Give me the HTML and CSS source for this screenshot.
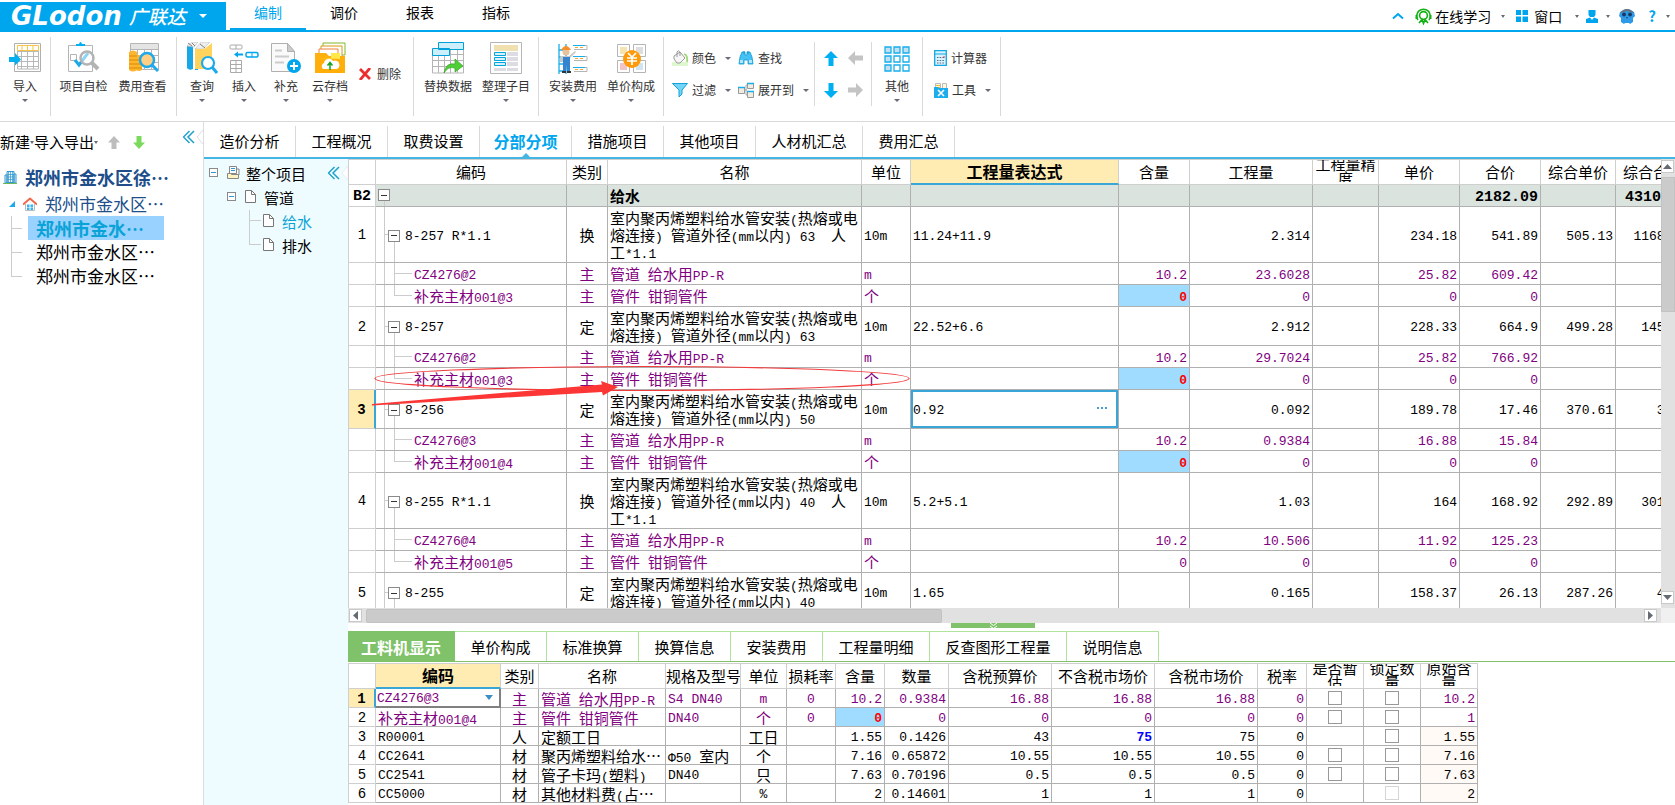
FILE: index.html
```html
<!DOCTYPE html>
<html lang="zh-CN">
<head>
<meta charset="utf-8">
<title>广联达计价</title>
<link rel="stylesheet" href="styles.css">
</head>
<body>
<header class="top">
  <button class="logo"><span class="logo-en">GLodon</span><span class="logo-cn">广联达</span><span class="caret caret-white"></span></button>
  <nav class="menu">
    <a href="#" class="on">编制</a><a href="#">调价</a><a href="#">报表</a><a href="#">指标</a>
  </nav>
  <div class="util">
    <button aria-label="收起"><svg width="12" height="8" viewBox="0 0 12 8"><path d="M1 6.500L6 2l5 4.500" fill="none" stroke="#00a6ed" stroke-width="2"/></svg></button>
    <button class="u-learn"><svg width="17" height="17" viewBox="0 0 17 17"><path d="M3 12A6.800 6.800 0 1 1 14 12" fill="none" stroke="#12b012" stroke-width="1.600"/><circle cx="8.500" cy="7.500" r="3.900" fill="none" stroke="#12b012" stroke-width="1.600"/><path d="M1.500 7v4M15.500 7v4" stroke="#12b012" stroke-width="2"/><path d="M4 15l3-3.500 1.500 4 1.500-4L13 15" fill="none" stroke="#12b012" stroke-width="1.600"/></svg>在线学习<span class="caret"></span></button>
    <button class="u-win"><svg width="12" height="12" viewBox="0 0 12 12"><path d="M0 0h5v5H0zM6.500 0H12v5H6.500zM0 6.500h5V12H0zM6.500 6.500H12V12H6.500z" fill="#00a6ed"/></svg>窗口<span class="caret"></span></button>
    <button class="u-user" aria-label="用户"><svg width="14" height="13" viewBox="0 0 14 13"><path d="M3.500 0h7v5L9 7H5L3.500 5zM1 9l4-1.500 2 2.500 2-2.500L13 9v4H1z" fill="#00a6ed"/></svg><span class="caret"></span></button>
    <button class="u-owl" aria-label="助手"><svg width="16" height="16" viewBox="0 0 16 16"><path d="M1 4Q8-2 15 4l1 4-2 2v4l-3 2-1-1H6l-1 1-3-2v-4L0 8z" fill="#2f9ae8"/><path d="M1 5Q8-3 15 5L8 3z" fill="#6b7078"/><circle cx="5" cy="6.500" r="2" fill="#173a63"/><circle cx="11" cy="6.500" r="2" fill="#173a63"/><path d="M7 9h2l-1 2z" fill="#174f80"/></svg></button>
    <button class="u-help" aria-label="帮助"><b>?</b><span class="caret"></span></button>
  </div>
</header>

<section class="ribbon">
  <div class="group">
    <button class="big w50"><svg viewBox="0 0 32 32"><path d="M5.500 1.500h26v28h-26z" fill="#fff" stroke="#b0b0b0"/><path d="M8 9.500h22M8 14.500h22M8 19.500h22M8 24.500h22M12.500 9v18M18.500 9v18M24.500 9v18M8.500 9v18h21V9" fill="none" stroke="#b8b8b8"/><path d="M8.500 3.500h21v5h-21zM13 3.500v5M18.500 3.500v5M24 3.500v5" fill="none" stroke="#f8c544"/><path d="M0 15h6v-4l6 6.500-6 6V20H0z" fill="#00b0f0"/></svg>导入<span class="caret"></span></button>
  </div>
  <div class="group g2">
    <button class="big w59"><svg viewBox="0 0 32 32"><path d="M.500 3.500h24v26H.500z" fill="#fff" stroke="#b5b5b5"/><path d="M8 4V2h3q1.500-4 3 0h3v2z" fill="#00b0f0"/><path d="M2.500 12.500h6v6h-6z" fill="none" stroke="#b5b5b5"/><path d="M7 18l4 5 9-12" fill="none" stroke="#1fa8e8" stroke-width="3"/><circle cx="19" cy="16" r="6.500" fill="#fff" fill-opacity=".5" stroke="#b3b3b3" stroke-width="2.500"/><path d="M24 21l6 6" stroke="#b3b3b3" stroke-width="4"/></svg>项目自检</button>
    <button class="big w59"><svg viewBox="0 0 32 32"><path d="M3.500 1.500h28v26h-28z" fill="#fff" stroke="#b5b5b5"/><path d="M4 2h27v5H4z" fill="#e4e4e4"/><path d="M4 7.500h27M4 13.500h27M4 20.500h27M10.500 8v19M17.500 8v19M24.500 8v19" stroke="#b5b5b5"/><path d="M2 10q4-3 8 0v18q-4 3-8 0zM9 14q3-2 6 0v14q-3 2-6 0z" fill="#ffb62e"/><path d="M2 14h8M2 18h12M2 22h13M2 26h13" stroke="#d98a00"/><circle cx="20" cy="18" r="7" fill="#ffcf85" stroke="#1da9ec" stroke-width="2.500"/><path d="M25 23l6 6" stroke="#1da9ec" stroke-width="3"/></svg>费用查看</button>
  </div>
  <div class="group g3">
    <button class="big w42"><svg viewBox="0 0 32 32"><path d="M1 4h6v23q-4 2-6-1zM9 6l3 2v20H9z" fill="#18a8e8"/><path d="M1 4l5-4h6l-4 5zM9 7l6-7h9l-7 7z" fill="#eee" stroke="#bbb" stroke-width=".600"/><path d="M9 7h9v20H9zM18 7l8-6v20l-8 6z" fill="#ffd35c"/><path d="M2 1l4 3M6 1l3 3M14 2l5 4" stroke="#555" stroke-width=".700"/><circle cx="22" cy="21" r="6" fill="#fff" stroke="#1da9ec" stroke-width="2.200"/><path d="M26 25l5 6" stroke="#1da9ec" stroke-width="3"/></svg>查询<span class="caret"></span></button>
    <button class="big w42"><svg viewBox="0 0 32 32"><rect x="2" y="3" width="12" height="4" rx="1" fill="none" stroke="#aaa"/><path d="M8 3v4M2.500 18.500h11v12h-11zM2.500 22.500h11M2.500 26.500h11M8 18.500v12" fill="none" stroke="#aaa"/><path d="M6 12.500l4-3v2h5v2h-5v2z" fill="#00a6ed"/><rect x="18" y="10.500" width="12" height="4.500" rx="1.500" fill="none" stroke="#00a6ed" stroke-width="1.500"/><path d="M24 10v5" stroke="#00a6ed"/></svg>插入<span class="caret"></span></button>
    <button class="big w42"><svg viewBox="0 0 32 32"><path d="M1.500 1.500h16l7 8v20h-23z" fill="#fafafa" stroke="#b0b0b0"/><path d="M17.500 1.500v8h7z" fill="#ccc" stroke="#b0b0b0"/><path d="M5 8.500h7M5 14.500h14M5 20.500h9" stroke="#ccc" stroke-width="2"/><circle cx="24" cy="24" r="7" fill="#00a6ed"/><path d="M20 24h8M24 20v8" stroke="#fff" stroke-width="2"/></svg>补充<span class="caret"></span></button>
    <button class="big w46"><svg viewBox="0 0 32 32"><path d="M9 1h22v12H9z" fill="#fff" stroke="#82b82b"/><path d="M7 4h21v12H7z" fill="#fff" stroke="#d69a16"/><path d="M5 7h19v10H5z" fill="#fff" stroke="#f0803c"/><path d="M1 11h11l3 3h16v17H1z" fill="#ffb00d"/><path d="M6 16h11v-5h9v6" fill="#ffe94a"/><path d="M1 18h30v13H1z" fill="#ffae0a"/><path d="M9 27a3.500 3.500 0 0 1 1-6 5 5 0 0 1 9-2 4 4 0 0 1 4 8z" fill="#fff"/><path d="M16 28v-7M13.500 23.500l2.500-3 2.500 3" fill="none" stroke="#1aa321" stroke-width="1.500"/></svg>云存档<span class="caret"></span></button>
    <button class="small del"><svg width="12" height="12" viewBox="0 0 12 12"><path d="M1 1l10 10M11 0L1 12" stroke="#ec2d2d" stroke-width="2.800"/></svg>删除</button>
  </div>
  <div class="group g4">
    <button class="big w58"><svg viewBox="0 0 32 32"><path d="M.500 7v24h31V7zM.500 18.500h31M.500 24.500h31M6.500 13v18M12.500 10v21M18.500 8v23M25.500 7v24M12 12.500h19" fill="#fff" stroke="#b5b5b5"/><path d="M6.500.500h25v7h-25zM.500 6.500h17v7H.500z" fill="#cdeffc" stroke="#00a0d8"/><path d="M12 31q2-11 11-9v-5l8 7-8 6v-4q-7-2-11 5z" fill="#4fce38" stroke="#31a51c" stroke-width=".700"/></svg>替换数据</button>
    <button class="big w58"><svg viewBox="0 0 32 32"><path d="M.500.500h31v31H.500z" fill="#fff" stroke="#b5b5b5"/><path d="M4 3h24v6H4z" fill="#f0dfaf"/><path d="M4.500 10.500h11v3h-11zM4.500 15.500h11v3h-11zM4.500 20.500h11v3h-11z" fill="#d8f1fc" stroke="#00a6dc"/><path d="M17 10h11v4H17zM17 15h11v4H17zM17 20h11v4H17zM17 26h11v3H17zM4 26h12v3H4z" fill="#dcdce2"/></svg>整理子目<span class="caret"></span></button>
  </div>
  <div class="group g4">
    <button class="big w58"><svg viewBox="0 0 32 32"><path d="M2 2v30M9 2v30M2 8h7M2 15h7M2 22h7M2 29h7" stroke="#18aeea" stroke-width="1.300"/><path d="M17 3.500h13v4H17M17 14.500h13v4H17M17 25.500h13v4H17" fill="none" stroke="#b5b5b5"/><path d="M16 3.500h12M16 14.500h12M16 25.500h12" stroke="#18aeea"/><path d="M18 5.500h8M18 16.500h8M18 27.500h8" stroke="#f6a634" stroke-dasharray="3 2"/><circle cx="9" cy="10" r="3.500" fill="#e8c29a"/><path d="M4 8q5-8 10 0z" fill="#f4912c"/><path d="M4 14l8 0 6-5 1 1-6 6v4H3v-5z" fill="#c7c7c7"/><path d="M6 15h7v14h-3v-6l-1 6H6z" fill="#3384ce"/><path d="M5 29h4v2H5zM10 29h4v2h-4z" fill="#333"/></svg>安装费用<span class="caret"></span></button>
    <button class="big w58"><svg viewBox="0 0 32 32"><path d="M2.500 2.500h12v12h-12zM18.500 2.500h12v12h-12zM2.500 18.500h12v12h-12zM18.500 18.500h12v12h-12z" fill="#fff" stroke="#b5b5b5"/><path d="M5 5h7v7H5z" fill="#f5e3b0"/><path d="M21 5h7v7h-7z" fill="#ddd"/><path d="M5 21h7v7H5z" fill="#f1c5c5"/><path d="M21 21h7v7h-7z" fill="#cfe5f1"/><circle cx="17" cy="17" r="9" fill="#ff9b0a"/><path d="M13 11l4 4 4-4M12 16h10M12 19h10M17 15v8" fill="none" stroke="#fff" stroke-width="1.700"/></svg>单价构成<span class="caret"></span></button>
  </div>
  <div class="group tools">
    <div class="pairs">
      <button class="small"><svg width="16" height="16" viewBox="0 0 16 16"><path d="M0 12h16v4H0z" fill="#dff7cf"/><path d="M2 6l6-4 5 6-5 5H5L2 9z" fill="#f6f6f6" stroke="#999"/><path d="M5 7V2q2-3 3 1v3" fill="none" stroke="#999"/><path d="M12 4q4 1 3 8" fill="none" stroke="#9fd977" stroke-width="1.800"/></svg>颜色<span class="caret"></span></button>
      <button class="small"><svg width="16" height="16" viewBox="0 0 16 16"><path d="M4 2h3v3h2V2h3l2 5 1 7h-5v-4H6v4H1l1-7z" fill="#45c1f3" stroke="#0f9bd6" stroke-width=".800"/><path d="M6 1v3M10 1v3" stroke="#0f9bd6"/><path d="M2 10h3v3H2zM11 10h3v3h-3z" fill="#b4e5fa"/></svg>查找</button>
      <button class="small"><svg width="16" height="16" viewBox="0 0 16 16"><path d="M.500 1.500h15L10 8v4l-3 3V8z" fill="#72d4f6" stroke="#12a2d8"/></svg>过滤<span class="caret"></span></button>
      <button class="small"><svg width="16" height="16" viewBox="0 0 16 16"><path d="M7 8h2M8 3v10M8 3h2M8 13h2" stroke="#aaa"/><path d="M.500 5.500h6v6h-6zM9.500 1.500h6v5h-6zM9.500 9.500h6v6h-6z" fill="#f1ece0" stroke="#9a9a9a"/><path d="M0 5.500h7M9 1.500h7M9 9.500h7" stroke="#18aeea" stroke-width="1.500"/></svg>展开到<span class="caret"></span></button>
    </div>
    <div class="moves">
      <button aria-label="上移"><svg width="14" height="15" viewBox="0 0 14 15"><path d="M7 0l7 7H9.500v8h-5V7H0z" fill="#00aef2"/></svg></button>
      <button aria-label="左移"><svg width="15" height="14" viewBox="0 0 15 14"><path d="M0 7l7-7v4.500h8v5H7V14z" fill="#c4c4c4"/></svg></button>
      <button aria-label="下移"><svg width="14" height="15" viewBox="0 0 14 15"><path d="M7 15l7-7H9.500V0h-5v8H0z" fill="#00aef2"/></svg></button>
      <button aria-label="右移"><svg width="15" height="14" viewBox="0 0 15 14"><path d="M15 7L8 0v4.500H0v5h8V14z" fill="#c4c4c4"/></svg></button>
    </div>
    <button class="big w50"><svg viewBox="0 0 32 32"><g fill="#c3dff2" stroke="#16aeea" stroke-width="1.300"><path d="M4 5h6v6H4zM13 5h6v6h-6zM22 5h6v6h-6zM4 14h6v6H4zM4 23h6v6H4z"/><path d="M13 14h6v6h-6zM22 14h6v6h-6zM13 23h6v6h-6zM22 23h6v6h-6z" fill="#fff"/></g></svg>其他<span class="caret"></span></button>
  </div>
  <div class="group last">
    <button class="small"><svg width="13" height="16" viewBox="0 0 13 16"><path d="M.700.700h11.600v14.600H.700z" fill="#d8f3fd" stroke="#12a8e4" stroke-width="1.300"/><path d="M1 4h11" stroke="#12a8e4"/><path d="M3 7.500h7M3 10.500h7M3 13h7" stroke="#58668a" stroke-dasharray="1.500 1.200"/><path d="M9 7h2" stroke="#f33"/></svg>计算器</button>
    <button class="small"><svg width="14" height="16" viewBox="0 0 14 16"><path d="M1.500 1.500h5v5h-5zM8.500 1.500h4v5h-4z" fill="#fff7dc" stroke="#bbb"/><path d="M2 3.500h4M2 5.500h4" stroke="#f3b93b"/><path d="M0 5h4l1 1h9v10H0z" fill="#1badec"/><path d="M4 8l6 6M10 8l-6 6" stroke="#fff" stroke-width="1.600"/></svg>工具<span class="caret"></span></button>
  </div>
</section>

<main class="work">
  <aside class="side">
    <div class="side-bar">
      <button>新建<span class="caret"></span></button><button>导入导出<span class="caret"></span></button>
      <button class="arr" aria-label="上移"><svg width="12" height="13" viewBox="0 0 12 13"><path d="M6 0l6 6.500H8.500V13h-5V6.500H0z" fill="#bdbdbd"/></svg></button>
      <button class="arr" aria-label="下移"><svg width="12" height="13" viewBox="0 0 12 13"><path d="M6 13l6-6.500H8.500V0h-5v6.500H0z" fill="#7bd95e"/></svg></button>
      <button class="fold" aria-label="折叠"><svg width="20" height="14" viewBox="0 0 20 14"><path d="M6.500 1l-6 6 6 6M11 1L5 7l6 6" fill="none" stroke="#1fa0cc" stroke-width="1.500"/><path d="M20 0l-6 7 6 7" fill="none" stroke="#ddd"/></svg></button>
    </div>
    <ul class="proj">
      <li class="p1"><svg width="14" height="14" viewBox="0 0 14 14"><path d="M4 1.500h7v11H4zM2 5h2v8H2zM11 4h2v9h-2z" fill="#e9f6fd" stroke="#3497cd"/><path d="M5.500 2v10M7.500 2v10M9.500 2v10M4 4.500h7M4 7h7M4 9.500h7" stroke="#3497cd" stroke-width=".700"/><path d="M0 13.500h14" stroke="#68b856"/></svg>郑州市金水区徐…</li>
      <li class="p2"><svg width="6" height="6" viewBox="0 0 6 6"><path d="M6 0v6H0z" fill="#1da9ec"/></svg><svg width="14" height="14" viewBox="0 0 14 14"><path d="M2.500 7v6.500h9V7" fill="#fff" stroke="#bbb"/><path d="M0 7.500l7-6 7 6" fill="none" stroke="#f0684c" stroke-width="2"/><path d="M4 7.500h2.500V10H4zM7.500 7.500H10V10H7.500zM4 10.500h2.500V13H4zM7.500 10.500H10V13H7.500z" fill="#3ab4ee"/></svg>郑州市金水区…</li>
      <li class="p3 sel"><a href="#">郑州市金水…</a></li>
      <li class="p3"><a href="#">郑州市金水区…</a></li>
      <li class="p3 end"><a href="#">郑州市金水区…</a></li>
    </ul>
  </aside>

  <div class="right">
    <nav class="tabs">
      <a href="#">造价分析</a><a href="#">工程概况</a><a href="#">取费设置</a><a href="#" class="on">分部分项</a><a href="#">措施项目</a><a href="#">其他项目</a><a href="#" class="wide">人材机汇总</a><a href="#">费用汇总</a>
    </nav>
    <div class="body">
      <aside class="tree">
        <button class="fold" aria-label="折叠"><svg width="20" height="14" viewBox="0 0 20 14"><path d="M6.500 1l-6 6 6 6M11 1L5 7l6 6" fill="none" stroke="#1fa0cc" stroke-width="1.500"/><path d="M20 0l-6 7 6 7z" fill="#fff" stroke="#ddd" stroke-width=".500"/></svg></button>
        <ul>
          <li class="t1"><span class="tbox"></span><svg width="13" height="13" viewBox="0 0 13 13"><path d="M2.500.500h7v7h-7z" fill="#fff" stroke="#888"/><path d="M4 2.500h4M4 4.500h4" stroke="#3497cd"/><path d="M.500 7.500h3l1 1h7v4H.500z" fill="#fff3c0" stroke="#888"/><path d="M10 3h2v6" fill="none" stroke="#888"/></svg>整个项目</li>
          <li class="t2"><span class="tbox"></span><svg width="11" height="13" viewBox="0 0 11 13"><path d="M.500.500h6l4 4v8H.500z" fill="#fff" stroke="#777"/><path d="M6.500.500v4h4" fill="none" stroke="#777"/></svg>管道</li>
          <li class="t3 on"><svg width="11" height="13" viewBox="0 0 11 13"><path d="M.500.500h6l4 4v8H.500z" fill="#fff" stroke="#777"/><path d="M6.500.500v4h4" fill="none" stroke="#777"/></svg>给水</li>
          <li class="t3 end"><svg width="11" height="13" viewBox="0 0 11 13"><path d="M.500.500h6l4 4v8H.500z" fill="#fff" stroke="#777"/><path d="M6.500.500v4h4" fill="none" stroke="#777"/></svg>排水</li>
        </ul>
      </aside>
      <div class="content">
        <div class="pane">
          <div class="view">
            <table class="grid main">
              <colgroup><col class="c27"><col class="c191"><col class="c41"><col class="c254"><col class="c49"><col class="c208"><col class="c71"><col class="c123"><col class="c66"><col class="c81"><col class="c81"><col class="c75"><col class="c75"></colgroup>
              <thead><tr><th></th><th>编码</th><th>类别</th><th>名称</th><th>单位</th><th class="cur">工程量表达式</th><th>含量</th><th>工程量</th><th><div class="two">工程量精度</div></th><th>单价</th><th>合价</th><th>综合单价</th><th>综合合价</th></tr></thead>
              <tbody>
                <tr class="h22 sum"><th>B2</th><td class="code root"><span class="tbox"></span></td><td></td><td class="zh">给水</td><td></td><td></td><td></td><td></td><td></td><td></td><td class="r">2182.09</td><td></td><td class="r">4310.66</td></tr>
                <tr class="h56"><th>1</th><td class="code par"><span class="tbox"></span>8-257 R*1.1</td><td class="zh c">换</td><td class="zh">室内聚丙烯塑料给水管安装<span class="n">(</span>热熔或电<br>熔连接<span class="n">) </span>管道外径<span class="n">(mm</span>以内<span class="n">) 63  </span>人<br>工<span class="n">*1.1</span></td><td>10m</td><td>11.24+11.9</td><td></td><td class="r">2.314</td><td></td><td class="r">234.18</td><td class="r">541.89</td><td class="r">505.13</td><td class="r">1168.87</td></tr>
                <tr class="h22 mat"><th></th><td class="code kid">CZ4276@2</td><td class="zh c">主</td><td class="zh">管道<span class="n"> </span>给水用<span class="n">PP-R</span></td><td>m</td><td></td><td class="r">10.2</td><td class="r">23.6028</td><td></td><td class="r">25.82</td><td class="r">609.42</td><td></td><td></td></tr>
                <tr class="h22 mat"><th></th><td class="code kid end zh">补充主材<span class="n">001@3</span></td><td class="zh c">主</td><td class="zh">管件<span class="n"> </span>钳铜管件</td><td class="zh">个</td><td></td><td class="r warn">0</td><td class="r">0</td><td></td><td class="r">0</td><td class="r">0</td><td></td><td></td></tr>
                <tr class="h39"><th>2</th><td class="code par"><span class="tbox"></span>8-257</td><td class="zh c">定</td><td class="zh">室内聚丙烯塑料给水管安装<span class="n">(</span>热熔或电<br>熔连接<span class="n">) </span>管道外径<span class="n">(mm</span>以内<span class="n">) 63</span></td><td>10m</td><td>22.52+6.6</td><td></td><td class="r">2.912</td><td></td><td class="r">228.33</td><td class="r">664.9</td><td class="r">499.28</td><td class="r">1453.9</td></tr>
                <tr class="h22 mat"><th></th><td class="code kid">CZ4276@2</td><td class="zh c">主</td><td class="zh">管道<span class="n"> </span>给水用<span class="n">PP-R</span></td><td>m</td><td></td><td class="r">10.2</td><td class="r">29.7024</td><td></td><td class="r">25.82</td><td class="r">766.92</td><td></td><td></td></tr>
                <tr class="h22 mat"><th></th><td class="code kid end zh">补充主材<span class="n">001@3</span></td><td class="zh c">主</td><td class="zh">管件<span class="n"> </span>钳铜管件</td><td class="zh">个</td><td></td><td class="r warn">0</td><td class="r">0</td><td></td><td class="r">0</td><td class="r">0</td><td></td><td></td></tr>
                <tr class="h39"><th class="cur">3</th><td class="code par"><span class="tbox"></span>8-256</td><td class="zh c">定</td><td class="zh">室内聚丙烯塑料给水管安装<span class="n">(</span>热熔或电<br>熔连接<span class="n">) </span>管道外径<span class="n">(mm</span>以内<span class="n">) 50</span></td><td>10m</td><td class="edit"><div><input type="text" value="0.92" aria-label="工程量表达式"><button aria-label="更多"><i></i><i></i><i></i></button></div></td><td></td><td class="r">0.092</td><td></td><td class="r">189.78</td><td class="r">17.46</td><td class="r">370.61</td><td class="r">34.1</td></tr>
                <tr class="h22 mat"><th></th><td class="code kid">CZ4276@3</td><td class="zh c">主</td><td class="zh">管道<span class="n"> </span>给水用<span class="n">PP-R</span></td><td>m</td><td></td><td class="r">10.2</td><td class="r">0.9384</td><td></td><td class="r">16.88</td><td class="r">15.84</td><td></td><td></td></tr>
                <tr class="h22 mat"><th></th><td class="code kid end zh">补充主材<span class="n">001@4</span></td><td class="zh c">主</td><td class="zh">管件<span class="n"> </span>钳铜管件</td><td class="zh">个</td><td></td><td class="r warn">0</td><td class="r">0</td><td></td><td class="r">0</td><td class="r">0</td><td></td><td></td></tr>
                <tr class="h56"><th>4</th><td class="code par"><span class="tbox"></span>8-255 R*1.1</td><td class="zh c">换</td><td class="zh">室内聚丙烯塑料给水管安装<span class="n">(</span>热熔或电<br>熔连接<span class="n">) </span>管道外径<span class="n">(mm</span>以内<span class="n">) 40  </span>人<br>工<span class="n">*1.1</span></td><td>10m</td><td>5.2+5.1</td><td></td><td class="r">1.03</td><td></td><td class="r">164</td><td class="r">168.92</td><td class="r">292.89</td><td class="r">301.68</td></tr>
                <tr class="h22 mat"><th></th><td class="code kid">CZ4276@4</td><td class="zh c">主</td><td class="zh">管道<span class="n"> </span>给水用<span class="n">PP-R</span></td><td>m</td><td></td><td class="r">10.2</td><td class="r">10.506</td><td></td><td class="r">11.92</td><td class="r">125.23</td><td></td><td></td></tr>
                <tr class="h22 mat"><th></th><td class="code kid end zh">补充主材<span class="n">001@5</span></td><td class="zh c">主</td><td class="zh">管件<span class="n"> </span>钳铜管件</td><td class="zh">个</td><td></td><td class="r">0</td><td class="r">0</td><td></td><td class="r">0</td><td class="r">0</td><td></td><td></td></tr>
                <tr class="h39"><th>5</th><td class="code par"><span class="tbox"></span>8-255</td><td class="zh c">定</td><td class="zh">室内聚丙烯塑料给水管安装<span class="n">(</span>热熔或电<br>熔连接<span class="n">) </span>管道外径<span class="n">(mm</span>以内<span class="n">) 40</span></td><td>10m</td><td>1.65</td><td></td><td class="r">0.165</td><td></td><td class="r">158.37</td><td class="r">26.13</td><td class="r">287.26</td><td class="r">47.4</td></tr>
              </tbody>
            </table>
            <svg class="mark" width="570" height="50" viewBox="0 0 570 50"><ellipse cx="294" cy="19.500" rx="267" ry="12" fill="none" stroke="#f23c3c" stroke-width="1.200"/><path d="M24 45L254 25.500 253 22 270 28 255 36.500 254 33 150 39 24 46.500z" fill="#fb3634"/></svg>
          </div>
          <div class="vbar"><button aria-label="向上滚动"><svg width="9" height="5" viewBox="0 0 9 5"><path d="M0 5l4.500-5L9 5z" fill="#666a73"/></svg></button><div class="vthumb"></div><button aria-label="向下滚动"><svg width="9" height="5" viewBox="0 0 9 5"><path d="M0 0h9L4.500 5z" fill="#666a73"/></svg></button></div>
        </div>
        <div class="hrow"><div class="hbar"><button aria-label="向左滚动"><svg width="5" height="9" viewBox="0 0 5 9"><path d="M5 0v9L0 4.500z" fill="#666a73"/></svg></button><div class="hthumb"></div><button aria-label="向右滚动"><svg width="5" height="9" viewBox="0 0 5 9"><path d="M0 0v9l5-4.500z" fill="#666a73"/></svg></button></div></div>
        <div class="split"><button aria-label="收起下方"><svg width="9" height="6" viewBox="0 0 9 6"><path d="M1 0l3.500 2.500L8 0M1 3l3.500 2.500L8 3" fill="none" stroke="#fff"/></svg></button></div>
        <nav class="subtabs"><a href="#" class="on">工料机显示</a><a href="#">单价构成</a><a href="#">标准换算</a><a href="#">换算信息</a><a href="#">安装费用</a><a href="#" class="w107">工程量明细</a><a href="#" class="w137">反查图形工程量</a><a href="#">说明信息</a></nav>
        <div class="sub">
          <table class="grid detail">
            <colgroup><col class="c27"><col class="c125"><col class="c38"><col class="c127"><col class="c75"><col class="c46"><col class="c49"><col class="c49"><col class="c64"><col class="c103"><col class="c103"><col class="c103"><col class="c49"><col class="c57"><col class="c57"><col class="c57"></colgroup>
            <thead><tr><th></th><th class="cur">编码</th><th>类别</th><th>名称</th><th>规格及型号</th><th>单位</th><th>损耗率</th><th>含量</th><th>数量</th><th>含税预算价</th><th>不含税市场价</th><th>含税市场价</th><th>税率</th><th><div class="two">是否暂估</div></th><th><div class="two">锁定数量</div></th><th><div class="two">原始含量</div></th></tr></thead>
            <tbody>
              <tr class="mat"><th class="cur">1</th><td class="pick"><div><select aria-label="编码"><option>CZ4276@3</option></select><span></span></div></td><td class="zh c">主</td><td class="zh">管道<span class="n"> </span>给水用<span class="n">PP-R</span></td><td>S4 DN40</td><td class="c">m</td><td class="c">0</td><td class="r">10.2</td><td class="r">0.9384</td><td class="r">16.88</td><td class="r">16.88</td><td class="r">16.88</td><td class="r">0</td><td class="tick"><input type="checkbox" aria-label="是否暂估"></td><td class="tick"><input type="checkbox" aria-label="锁定数量"></td><td class="r">10.2</td></tr>
              <tr class="mat"><th>2</th><td class="zh">补充主材<span class="n">001@4</span></td><td class="zh c">主</td><td class="zh">管件<span class="n"> </span>钳铜管件</td><td>DN40</td><td class="zh c">个</td><td class="c">0</td><td class="r warn">0</td><td class="r">0</td><td class="r">0</td><td class="r">0</td><td class="r">0</td><td class="r">0</td><td class="tick"><input type="checkbox" aria-label="是否暂估"></td><td class="tick"><input type="checkbox" aria-label="锁定数量"></td><td class="r">1</td></tr>
              <tr><th>3</th><td>R00001</td><td class="zh c">人</td><td class="zh">定额工日</td><td></td><td class="zh c">工日</td><td></td><td class="r">1.55</td><td class="r">0.1426</td><td class="r">43</td><td class="r blue">75</td><td class="r">75</td><td class="r">0</td><td></td><td class="tick"><input type="checkbox" aria-label="锁定数量"></td><td class="r cream">1.55</td></tr>
              <tr><th>4</th><td>CC2641</td><td class="zh c">材</td><td class="zh">聚丙烯塑料给水…</td><td class="zh"><span class="n">Φ50 </span>室内</td><td class="zh c">个</td><td></td><td class="r">7.16</td><td class="r">0.65872</td><td class="r">10.55</td><td class="r">10.55</td><td class="r">10.55</td><td class="r">0</td><td class="tick"><input type="checkbox" aria-label="是否暂估"></td><td class="tick"><input type="checkbox" aria-label="锁定数量"></td><td class="r cream">7.16</td></tr>
              <tr><th>5</th><td>CC2541</td><td class="zh c">材</td><td class="zh">管子卡玛<span class="n">(</span>塑料<span class="n">)</span></td><td>DN40</td><td class="zh c">只</td><td></td><td class="r">7.63</td><td class="r">0.70196</td><td class="r">0.5</td><td class="r">0.5</td><td class="r">0.5</td><td class="r">0</td><td class="tick"><input type="checkbox" aria-label="是否暂估"></td><td class="tick"><input type="checkbox" aria-label="锁定数量"></td><td class="r cream">7.63</td></tr>
              <tr><th>6</th><td>CC5000</td><td class="zh c">材</td><td class="zh">其他材料费<span class="n">(</span>占…</td><td></td><td class="c">%</td><td></td><td class="r">2</td><td class="r">0.14601</td><td class="r">1</td><td class="r">1</td><td class="r">1</td><td class="r">0</td><td></td><td class="tick"><input type="checkbox" disabled aria-label="锁定数量"></td><td class="r cream">2</td></tr>
            </tbody>
          </table>
        </div>
      </div>
    </div>
  </div>
</main>
</body>
</html>
```
FILE: styles.css
```css
* { box-sizing: border-box; }
html, body { height: 100%; }
body {
  margin: 0;
  display: flex;
  flex-direction: column;
  overflow: hidden;
  background: #fff;
  color: #000;
  font: 14px/20px "Noto Sans CJK SC", sans-serif;
}
button { padding: 0; border: 0; background: none; color: inherit; font: inherit; }
a { color: inherit; text-decoration: none; }
ul { margin: 0; padding: 0; list-style: none; }
svg { display: block; flex: none; }

.caret {
  flex: none;
  width: 0;
  height: 0;
  border: 3px solid transparent;
  border-top-color: #6b6b78;
  border-bottom: 0;
}
.caret-white { border-width: 4px 4px 0; border-top-color: #fff; }

/* title bar */
.top { flex: none; display: flex; height: 32px; border-bottom: 2px solid #00a6ed; }
.logo { display: flex; align-items: center; width: 226px; margin-top: 2px; padding-left: 11px; background: #00a6ed; color: #fff; }
.logo-en { font: italic bold 26px/28px "DejaVu Sans", sans-serif; }
.logo-cn { margin-left: 7px; font-size: 19px; font-style: italic; font-weight: 500; }
.logo .caret { margin-left: 13px; }
.menu { display: flex; margin-left: 4px; }
.menu a { width: 76px; padding-top: 2px; text-align: center; }
.menu .on { color: #00a6ed; border-bottom: 2px solid #00a6ed; }
.util { display: flex; align-items: center; margin-left: auto; padding: 2px 5px 0 0; }
.util button { display: flex; align-items: center; height: 28px; }
.util .caret { border-width: 3px 2px 0; margin-left: 10px; }
.util .u-learn { margin-left: 11px; gap: 3px; }
.util .u-win { margin-left: 11px; gap: 6px; }
.util .u-win .caret, .util .u-learn .caret { margin-left: 7px; }
.util .u-user { margin-left: 6px; }
.util .u-user .caret { margin-left: 7px; }
.util .u-owl { margin-left: 9px; }
.util .u-help { margin-left: 13px; color: #00a6ed; font-size: 15px; }

/* ribbon */
.ribbon { flex: none; display: flex; height: 90px; padding: 5px 0; border-bottom: 1px solid #d9d9d9; color: #333; font-size: 12px; line-height: 16px; }
.group { display: flex; border-right: 1px solid #d9d9d9; }
.g2 { padding: 0 4px 0 3px; }
.g3 { padding: 0 12px 0 4px; }
.g4 { padding: 0 3px 0 5px; }
.big { display: flex; flex-direction: column; align-items: center; justify-content: flex-start; padding-top: 5px; white-space: nowrap; }
.big svg { width: 32px; height: 32px; margin-bottom: 4px; }
.big .caret { margin-top: 5px; }
.w42 { width: 42px; }
.w46 { width: 46px; }
.w50 { width: 50px; }
.w58 { width: 58px; }
.w59 { width: 59px; }
.small { display: flex; align-items: center; gap: 4px; height: 32px; white-space: nowrap; }
.small .caret { margin-left: 5px; }
.del { align-self: flex-start; margin: 21px 0 0 6px; gap: 6px; }
.tools { align-items: flex-start; }
.pairs { display: grid; grid-template-columns: 66px 76px; padding: 5px 0 0 8px; }
.moves { display: grid; grid-template-columns: 25px 25px; grid-template-rows: 32px 32px; margin-top: 5px; padding: 0 3px; border: solid #d9d9d9; border-width: 0 1px; justify-items: center; align-items: center; }
.last { flex-direction: column; padding: 5px 9px 0 11px; }

/* project panel */
.work { flex: 1; min-height: 0; display: flex; }
.side { flex: none; width: 204px; border-right: 1px solid #ddd; }
.side-bar { display: flex; align-items: center; height: 40px; font-size: 15px; }
.side-bar button { display: flex; align-items: center; white-space: nowrap; }
.side-bar .caret { border-width: 3px 2px 0; }
.side-bar .arr { margin-left: 10px; }
.side-bar .arr + .arr { margin-left: 13px; }
.side-bar .fold { margin: 0 0 10px auto; }
.proj { font-size: 17px; }
.proj li { display: flex; align-items: center; height: 24px; white-space: nowrap; }
.proj .p1 { height: 30px; padding-left: 3px; gap: 8px; color: #204e8a; font-size: 18px; font-weight: bold; }
.proj .p2 { padding-left: 9px; gap: 8px; color: #204e8a; }
.proj .p3 {
  padding-left: 28px;
  background: linear-gradient(#ccc, #ccc) 11px 0 / 1px 100% no-repeat, linear-gradient(#ccc, #ccc) 11px 50% / 11px 1px no-repeat;
}
.proj .end { background-size: 1px 50%, 11px 1px; }
.proj a { width: 136px; padding-left: 8px; line-height: 24px; }
.proj .sel a { background: #99d1ff; color: #0aa3d8; font-size: 18px; font-weight: bold; }

/* page tabs */
.right { flex: 1; min-width: 0; display: flex; flex-direction: column; }
.tabs { flex: none; display: flex; height: 37px; padding-top: 4px; border-bottom: 2px solid #45b5e4; font-size: 15px; line-height: 30px; }
.tabs a { position: relative; width: 92px; text-align: center; border-right: 1px solid #d9d9d9; }
.tabs .wide { width: 107px; }
.tabs .on { color: #00a6ed; font-size: 16px; font-weight: bold; }
.tabs .on::after { content: ""; position: absolute; left: 50%; bottom: 0; margin-left: -4px; border: 4px solid transparent; border-top: 0; border-bottom-color: #45b5e4; }
.body { flex: 1; min-height: 0; display: flex; }

/* section tree */
.tree { position: relative; flex: none; width: 144px; padding-top: 3px; background: #effcff; font-size: 15px; }
.tree .fold { position: absolute; top: 7px; right: 0; }
.tree li { display: flex; align-items: center; height: 24px; }
.tree li svg, .tree li .tbox { margin-bottom: 4px; }
.tbox { flex: none; width: 9px; height: 9px; border: 1px solid #8a8a8a; background: linear-gradient(#333, #333) center / 5px 1px no-repeat #fff; }
.tree .tbox { background-image: linear-gradient(#3497cd, #3497cd); }
.tree .t1 { padding-left: 5px; }
.tree .t1 .tbox, .tree .t2 .tbox { margin-right: 9px; }
.tree .t1 svg { margin-right: 6px; }
.tree .t2 { padding-left: 23px; }
.tree .t2 svg, .tree .t3 svg { margin-right: 8px; }
.tree .t3 {
  padding-left: 59px;
  background: linear-gradient(#ccc, #ccc) 45px 0 / 1px 100% no-repeat, linear-gradient(#ccc, #ccc) 45px 45% / 12px 1px no-repeat;
}
.tree .end { background-size: 1px 45%, 12px 1px; }
.tree .on { color: #0aa3d8; }

/* grids */
.content { flex: 1; min-width: 0; display: flex; flex-direction: column; }
.pane { flex: 1; min-height: 0; display: flex; }
.view { position: relative; flex: 1; min-width: 0; overflow: hidden; }
.grid { table-layout: fixed; width: 0; border-collapse: separate; border-spacing: 0; border-left: 1px solid #cfcfcf; font: 13px/17px "Liberation Mono", "Noto Sans CJK SC", monospace; }
.c27 { width: 27px; } .c38 { width: 38px; } .c41 { width: 41px; } .c46 { width: 46px; }
.c49 { width: 49px; } .c57 { width: 57px; } .c64 { width: 64px; } .c66 { width: 66px; }
.c71 { width: 71px; } .c75 { width: 75px; } .c81 { width: 81px; } .c103 { width: 103px; }
.c123 { width: 123px; } .c125 { width: 125px; } .c127 { width: 127px; } .c191 { width: 191px; }
.c208 { width: 208px; } .c254 { width: 254px; }
.grid th, .grid td { padding: 3px 2px 0; border: solid #b0b0b0; border-width: 0 1px 1px 0; white-space: pre; overflow: hidden; }
.grid th { border-color: #cfcfcf; font-weight: normal; }
.grid thead th { height: 26px; padding: 0 0 2px; border-top-width: 1px; font-size: 15px; font-family: "Noto Sans CJK SC", sans-serif; }
.grid thead .cur { padding: 0; background: #ffecb3; border-bottom: 2px solid #3aa6d8; font-size: 16px; font-weight: bold; }
.grid tbody .cur { background: #ffecb3; border-right: 2px solid #3aa6d8; font-weight: bold; }
.grid tbody th { padding: 2px 0 0; font-size: 14px; }
.two { display: flex; align-items: center; justify-content: center; height: 22px; line-height: 14px; white-space: normal; overflow: hidden; }
.grid .zh { padding-top: 0; font-size: 15px; font-family: "Noto Sans CJK SC", sans-serif; }
.n { font-size: 13px; font-family: "Liberation Mono", monospace; line-height: 0; }
.grid .c { text-align: center; }
.grid .r { text-align: right; }
.h22 { height: 22px; } .h39 { height: 39px; } .h56 { height: 56px; }
.mat td { color: #800080; }
.grid .warn { background: #a0dcff; color: #f00; font-weight: bold; }
.grid .blue { color: #00f; font-weight: bold; }
.grid .cream { background: #fffaf5; }
.grid .sum th, .grid .sum td { font-weight: bold; font-size: 15px; }
.sum td { background-color: #dae3de; }
.grid .code { --l: linear-gradient(#ccc, #ccc); background-repeat: no-repeat; }
.code .tbox { display: inline-block; width: 12px; height: 12px; background-size: 6px 1px; vertical-align: -2px; }
.grid .root { padding-top: 0; background-image: var(--l); background-position: 8px 100%; background-size: 1px 5px; }
.grid .par { padding-left: 12px; background-image: var(--l), var(--l), var(--l); background-position: 8px 0, 18px 100%, 8px 50%; background-size: 1px 100%, 1px 40%, 5px 1px; }
.par .tbox { margin-right: 5px; }
.grid .kid { padding-left: 38px; background-image: var(--l), var(--l), var(--l); background-position: 8px 0, 18px 0, 18px 50%; background-size: 1px 100%, 1px 100%, 18px 1px; }
.grid .kid.end { background-size: 1px 100%, 1px 50%, 18px 1px; }
.grid .edit { padding: 0; box-shadow: inset 0 0 0 2px #3aa6d8; }
.edit div { display: flex; align-items: center; padding: 3px 11px 0 2px; }
.edit input { flex: 1; min-width: 0; padding: 0; border: 0; background: none; font: inherit; }
.edit button { display: flex; gap: 2px; padding-bottom: 6px; }
.edit i { width: 2px; height: 2px; background: #4a9fd8; }
.mark { position: absolute; left: 0; top: 200px; }

/* scroll bars */
.vbar { flex: none; display: flex; flex-direction: column; width: 14px; padding: 1px 0 4px; background: #e1e1e1; }
.vbar button, .hbar button { display: flex; align-items: center; justify-content: center; width: 13px; height: 13px; border: 1px solid #c9c9c9; background: #fff; }
.vthumb { height: 135px; margin: 4px 0 auto; background: #cbcbcb; border: 1px solid #c2c2c2; }
.hrow { flex: none; display: flex; padding-right: 14px; background: #f0f0f0; }
.hbar { flex: 1; display: flex; align-items: center; height: 15px; padding: 0 4px 0 1px; background: #e1e1e1; }
.hthumb { width: 44%; height: 14px; margin: 0 auto 0 4px; background: #cbcbcb; border: 1px solid #c2c2c2; border-radius: 2px; }
.split { flex: none; height: 8px; padding-right: 37px; }
.split button { display: flex; justify-content: center; width: 84px; height: 5px; margin: 0 auto; background: #80c269; }

/* detail panel */
.subtabs { flex: none; display: flex; height: 31px; border-bottom: 1px solid #80c269; font-size: 15px; line-height: 30px; }
.subtabs a { width: 92px; border: solid #b0e39c; border-width: 1px 1px 0 0; text-align: center; }
.subtabs .on { width: 107px; border-color: #80c269; background: #80c269; color: #fff; font-size: 16px; font-weight: bold; }
.subtabs .w107 { width: 107px; }
.subtabs .w137 { width: 137px; }
.sub { flex: none; padding: 1px 0 2px; overflow: hidden; }
.detail tbody { line-height: 15px; }
.detail tbody tr { height: 19px; }
.grid .tick { padding: 0; }
.tick input { display: block; appearance: none; width: 14px; height: 14px; margin: 0 auto; border: 1px solid #999; background: #fff; }
.tick input:disabled { border-color: #d5d5d5; }
.grid .pick { padding: 0; border-right: 2px solid #808080; border-bottom: 2px solid #808080; }
.pick div { display: grid; align-items: center; }
.pick select { grid-area: 1 / 1; height: 17px; padding: 3px 1px 0; border: 0; appearance: none; background: none; color: #800080; font: inherit; line-height: 14px; }
.pick span { grid-area: 1 / 1; justify-self: end; margin-right: 6px; border: 4px solid transparent; border-top: 5px solid #3a8fc7; border-bottom: 0; pointer-events: none; }
```
